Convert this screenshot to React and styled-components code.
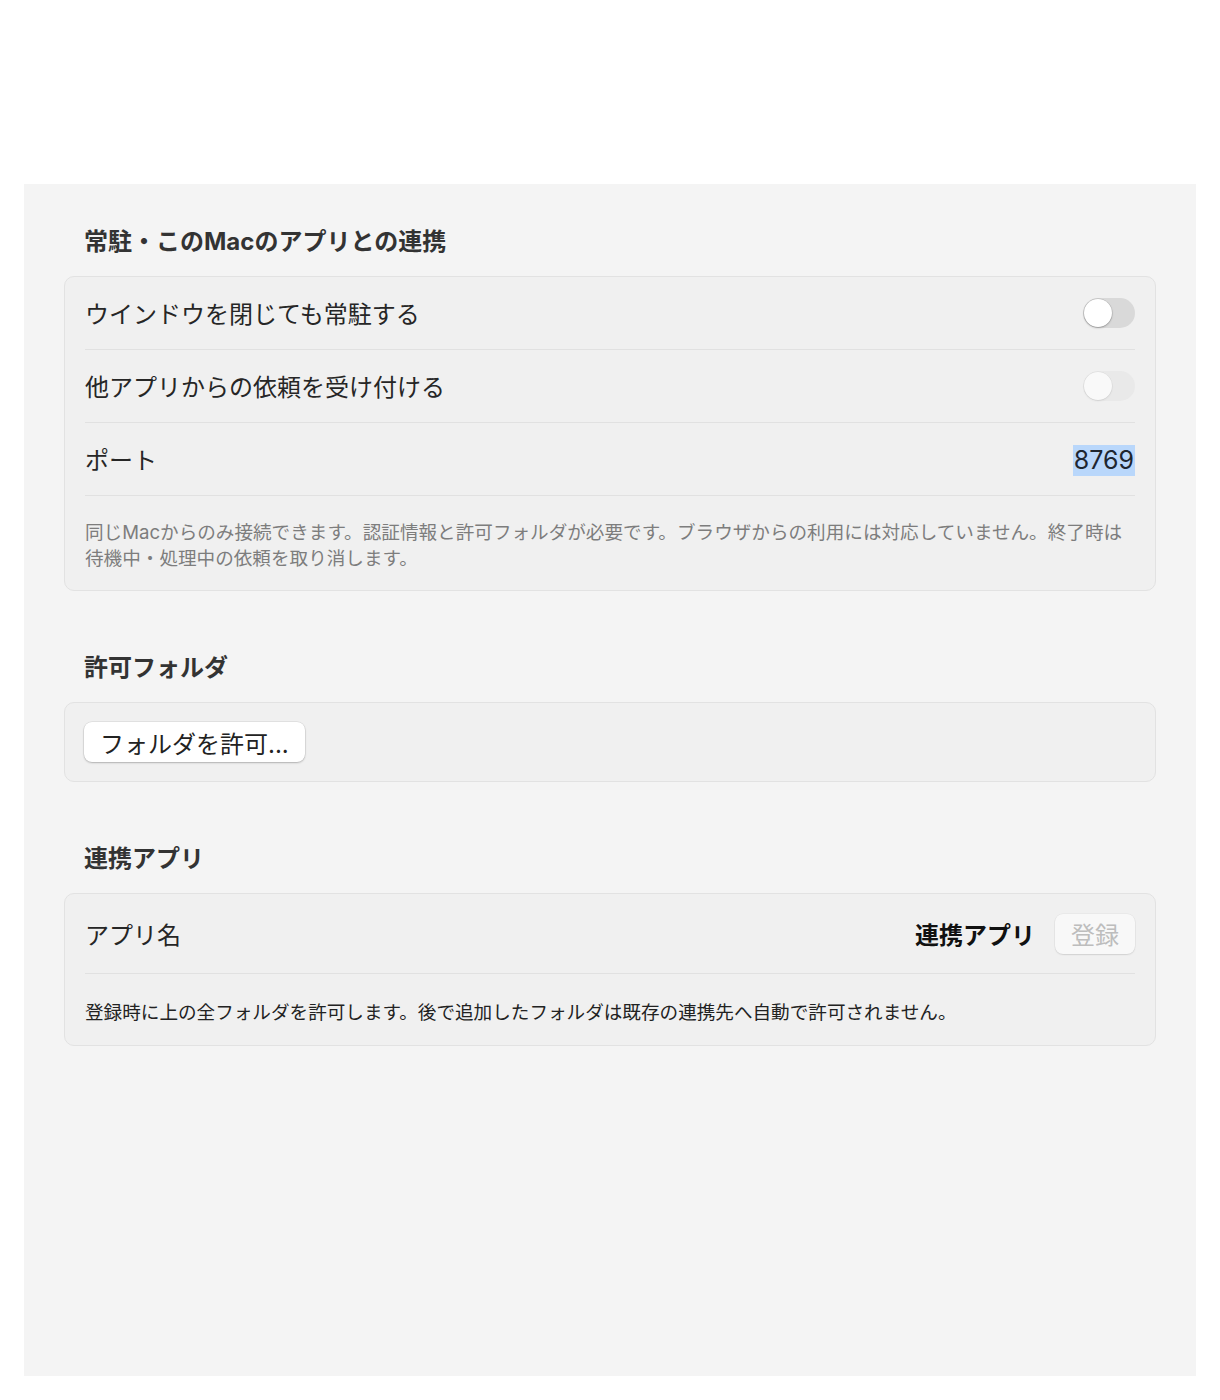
import React from "react";
import styled, { createGlobalStyle } from "styled-components";

const Global = createGlobalStyle`
  html, body { margin: 0; padding: 0; background: #ffffff; }
  body {
    font-family: "Inter", "Noto Sans CJK JP", sans-serif;
    -webkit-font-smoothing: antialiased;
  }
`;

const Page = styled.div`
  padding: 184px 24px 24px;
`;

const Panel = styled.main`
  background: #f4f4f4;
  height: 1192px;
  box-sizing: border-box;
  padding: 42px 40px;
  display: flex;
  flex-direction: column;
  gap: 61px;
`;

const Section = styled.section`
  display: flex;
  flex-direction: column;
  gap: 18px;
`;

const Heading = styled.h2`
  margin: 0;
  padding-left: 20px;
  font-size: 24px;
  line-height: 32px;
  font-weight: 700;
  color: #333333;
`;

const Box = styled.div`
  background: #f0f0f0;
  border: 1px solid #e2e2e2;
  border-radius: 10px;
  padding: ${(p) => p.$pad || "0"};
  display: flex;
  flex-direction: column;
  align-items: ${(p) => (p.$start ? "flex-start" : "stretch")};
`;

const Row = styled.div`
  margin: 0 20px;
  height: ${(p) => (p.$tall ? "79px" : "72px")};
  display: flex;
  align-items: center;
  justify-content: space-between;
  border-bottom: ${(p) => (p.$divider ? "1px solid #e1e1e1" : "none")};
`;

const Label = styled.span`
  font-size: 24px;
  line-height: 32px;
  color: #262626;
  padding-top: 4px;
`;

const Note = styled.p`
  margin: 0;
  padding: ${(p) => p.$pad || "23px 20px 19px"};
  font-size: 18.6px;
  line-height: 26px;
  color: ${(p) => (p.$dark ? "#222222" : "#7d7d7d")};
`;

const Toggle = styled.span`
  width: 52px;
  height: 30px;
  border-radius: 15px;
  box-sizing: border-box;
  background: ${(p) => (p.$disabled ? "#e9e9e9" : "#d9d9d9")};
  position: relative;
  display: inline-block;
  &::after {
    content: "";
    position: absolute;
    left: 1px;
    top: 1px;
    width: 28px;
    height: 28px;
    border-radius: 50%;
    background: ${(p) => (p.$disabled ? "#f9f9f9" : "#ffffff")};
    box-shadow: ${(p) =>
      p.$disabled
        ? "0 0 0 0.5px rgba(0,0,0,0.06), 0 1px 2px rgba(0,0,0,0.08)"
        : "0 0 0 0.5px rgba(0,0,0,0.15), 0 1px 2px rgba(0,0,0,0.25)"};
  }
`;

const Port = styled.span`
  font-size: 25px;
  line-height: 31px;
  color: #1e2630;
  background: #b9d7fb;
  padding: 0 1px;
  margin-top: 3px;
`;

const Button = styled.button`
  height: 40px;
  padding: 0 16px;
  border: none;
  border-radius: 8px;
  font-family: inherit;
  font-size: 24px;
  color: ${(p) => (p.$disabled ? "#bdbdbd" : "#222222")};
  background: ${(p) => (p.$disabled ? "#f8f8f8" : "#ffffff")};
  box-shadow: ${(p) =>
    p.$disabled
      ? "0 0 0 0.5px rgba(0,0,0,0.06), 0 1px 1.5px rgba(0,0,0,0.1)"
      : "0 0 0 0.5px rgba(0,0,0,0.1), 0 1px 2px rgba(0,0,0,0.22)"};
  cursor: default;
`;

const RightGroup = styled.div`
  display: flex;
  align-items: center;
  gap: 20px;
`;

const AppName = styled.span`
  font-size: 24px;
  font-weight: 600;
  color: #111111;
`;

export default function App() {
  return (
    <>
      <Global />
      <Page>
        <Panel>
          <Section>
            <Heading>常駐・このMacのアプリとの連携</Heading>
            <Box>
              <Row $divider>
                <Label>ウインドウを閉じても常駐する</Label>
                <Toggle />
              </Row>
              <Row $divider>
                <Label>他アプリからの依頼を受け付ける</Label>
                <Toggle $disabled />
              </Row>
              <Row $divider>
                <Label>ポート</Label>
                <Port>8769</Port>
              </Row>
              <Note>
                同じMacからのみ接続できます。認証情報と許可フォルダが必要です。ブラウザからの利用には対応していません。終了時は待機中・処理中の依頼を取り消します。
              </Note>
            </Box>
          </Section>

          <Section>
            <Heading>許可フォルダ</Heading>
            <Box $pad="19px" $start>
              <Button>フォルダを許可...</Button>
            </Box>
          </Section>

          <Section>
            <Heading>連携アプリ</Heading>
            <Box>
              <Row $divider $tall>
                <Label>アプリ名</Label>
                <RightGroup>
                  <AppName>連携アプリ</AppName>
                  <Button $disabled>登録</Button>
                </RightGroup>
              </Row>
              <Note $dark $pad="25px 20px 20px">
                登録時に上の全フォルダを許可します。後で追加したフォルダは既存の連携先へ自動で許可されません。
              </Note>
            </Box>
          </Section>
        </Panel>
      </Page>
    </>
  );
}
